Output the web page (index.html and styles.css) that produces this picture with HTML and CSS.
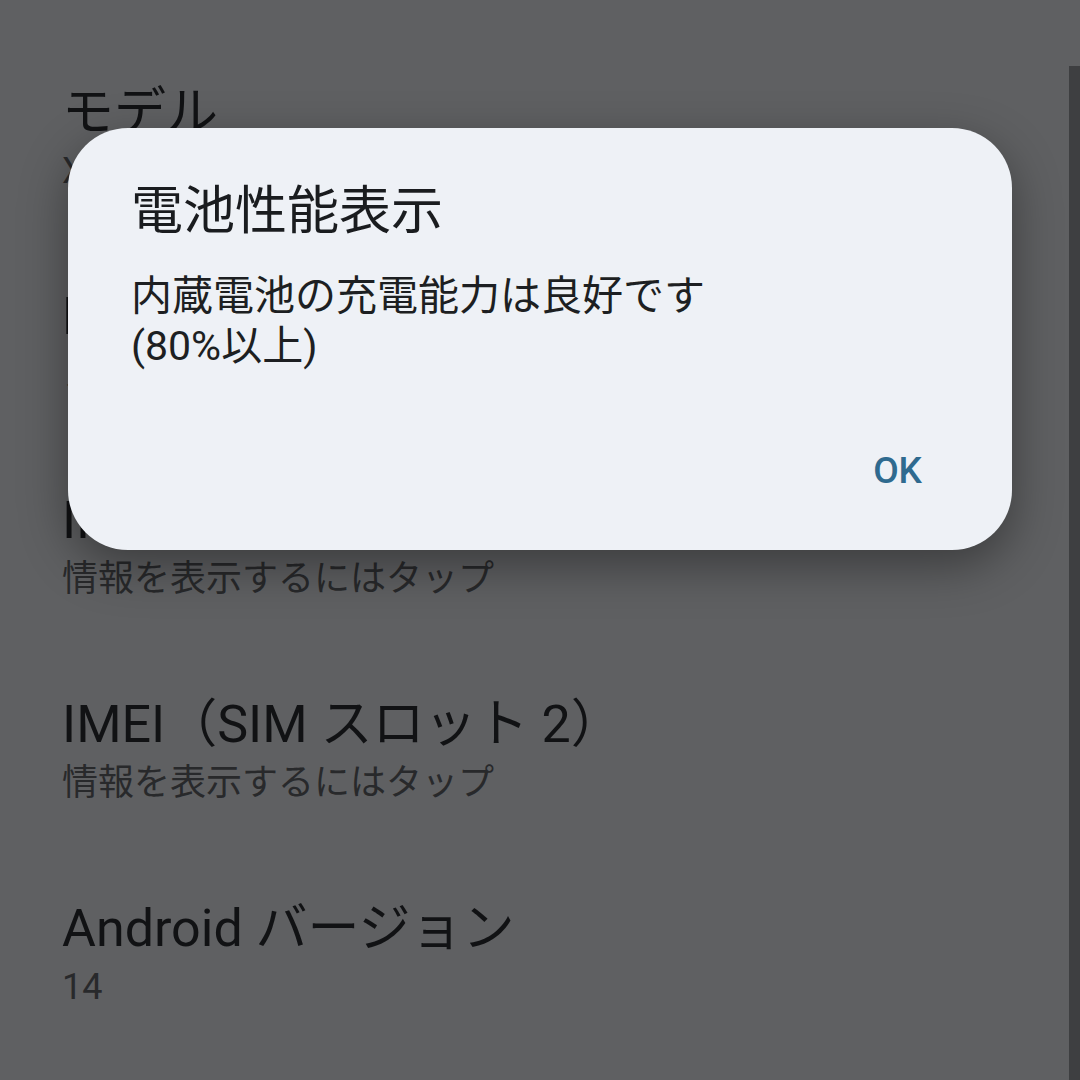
FILE: index.html
```html
<!DOCTYPE html>
<html lang="ja">
<head>
<meta charset="utf-8">
<title>電池性能表示</title>
<link rel="stylesheet" href="styles.css">
</head>
<body>
<div class="screen">
  <ul class="list">
    <li class="item">
      <div class="item-title">モデル</div>
      <div class="item-sub">XQ-DQ44</div>
    </li>
    <li class="item">
      <div class="item-title">Bluetooth</div>
      <div class="item-sub">ノード</div>
    </li>
    <li class="item">
      <div class="item-title">IMEI（SIM スロット 1）</div>
      <div class="item-sub">情報を表示するにはタップ</div>
    </li>
    <li class="item">
      <div class="item-title">IMEI（SIM スロット 2）</div>
      <div class="item-sub">情報を表示するにはタップ</div>
    </li>
    <li class="item">
      <div class="item-title">Android バージョン</div>
      <div class="item-sub">14</div>
    </li>
  </ul>
  <div class="scrollbar"></div>
  <div class="dialog" role="dialog">
    <h2 class="dialog-title">電池性能表示</h2>
    <p class="dialog-body">内蔵電池の充電能力は良好です<br>(80%以上)</p>
    <div class="dialog-actions">
      <button class="dialog-btn">OK</button>
    </div>
  </div>
</div>
</body>
</html>
```
FILE: styles.css
```css
* { box-sizing: border-box; }
html, body {
  margin: 0;
  padding: 0;
  width: 1080px;
  height: 1080px;
  overflow: hidden;
  background: #5f6062;
  font-family: "Roboto", "Noto Sans CJK JP", sans-serif;
}
.screen {
  position: relative;
  width: 1080px;
  height: 1080px;
  background: #5f6062;
}
.list {
  list-style: none;
  margin: 0;
  padding: 81px 0 0 62px;
  display: flex;
  flex-direction: column;
  gap: 88px;
}
.item {
  display: flex;
  flex-direction: column;
}
.item-title {
  font-size: 52px;
  line-height: 64px;
  color: #111214;
  white-space: nowrap;
}
.item-sub {
  font-size: 36px;
  line-height: 52px;
  color: #28292b;
  white-space: nowrap;
}
.scrollbar {
  position: absolute;
  top: 66px;
  right: 0;
  width: 11px;
  bottom: 0;
  background: #3e3f41;
}
.dialog {
  position: absolute;
  top: 128px;
  left: 68px;
  width: 944px;
  height: 422px;
  background: #eef1f6;
  border-radius: 60px;
  box-shadow: 0 16px 48px rgba(0, 0, 0, 0.38);
  padding: 53px 64px 57px 63px;
  display: flex;
  flex-direction: column;
}
.dialog-title {
  margin: 0;
  font-size: 52px;
  line-height: 62px;
  font-weight: 400;
  color: #1a1c1f;
}
.dialog-body {
  margin: 28px 0 0 0;
  font-size: 41px;
  line-height: 50px;
  color: #1d1f22;
}
.dialog-actions {
  margin-top: auto;
  display: flex;
  justify-content: flex-end;
}
.dialog-btn {
  border: 0;
  background: transparent;
  padding: 0 26px;
  font-family: "Roboto", "Noto Sans CJK JP", sans-serif;
  font-size: 37px;
  line-height: 44px;
  font-weight: 500;
  color: #2f6a8f;
}
```
